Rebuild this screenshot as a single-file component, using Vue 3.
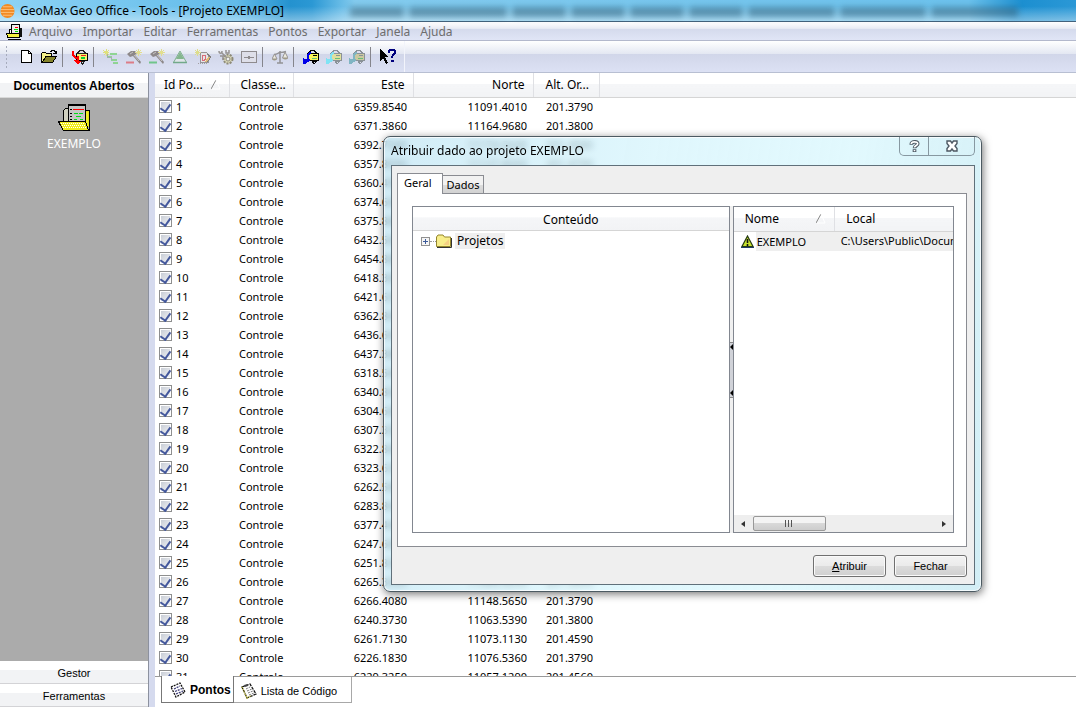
<script setup>
import { ref } from 'vue'

const menus = ['Arquivo', 'Importar', 'Editar', 'Ferramentas', 'Pontos', 'Exportar', 'Janela', 'Ajuda']

const points = ref([
  ['6359.8540', '11091.4010', '201.3790'],
  ['6371.3860', '11164.9680', '201.3800'],
  ['6392.7340', '11174.5600', '201.4580'],
  ['6357.8090', '11127.8060', '201.4790'],
  ['6360.4580'],
  ['6374.6080'],
  ['6375.8860'],
  ['6432.5680'],
  ['6454.8830'],
  ['6418.3680'],
  ['6421.6390'],
  ['6362.8450'],
  ['6436.6080'],
  ['6437.3860'],
  ['6318.5480'],
  ['6340.8630'],
  ['6304.6890'],
  ['6307.3580'],
  ['6322.8460'],
  ['6323.6380'],
  ['6262.5860'],
  ['6283.8630'],
  ['6377.4680'],
  ['6247.6830'],
  ['6251.8360'],
  ['6265.3680', '11080.6830', '201.3860'],
  ['6266.4080', '11148.5650', '201.3790'],
  ['6240.3730', '11063.5390', '201.3800'],
  ['6261.7130', '11073.1130', '201.4590'],
  ['6226.1830', '11076.5360', '201.3790'],
  ['6229.3250', '11057.1290', '201.4560'],
].map(([este, norte, alt], i) => ({ id: i + 1, este, norte, alt, checked: true })))
</script>

<template>
  <div class="app">
    <header class="titlebar">
      <svg class="logo" viewBox="0 0 16 16" aria-hidden="true">
        <circle cx="8" cy="8" r="7.5" fill="#f28a22" />
        <path d="M3 3.500h10M1 6.500h14M1 9.500h14M3 12.500h10" stroke="#ffc27c" stroke-width="1" />
      </svg>
      <h1>GeoMax Geo Office - Tools - [Projeto EXEMPLO]</h1>
      <div class="glass" aria-hidden="true"><i></i><i></i><i></i><i></i><i></i><i></i><i></i><i></i><i></i></div>
    </header>

    <nav class="menubar">
      <svg class="menuicon" viewBox="0 0 16 16" shape-rendering="crispEdges" aria-hidden="true">
        <path d="M3 5h3v6H3z" fill="#fff" stroke="#000" />
        <path d="M5.500.5h8v10h-8z" fill="#eee" stroke="#000" />
        <path d="M9 3h3" stroke="#f00" /><path d="M8 5.500h4M9 7.500h3" stroke="#0d0" />
        <path d="M14.500 4v9" stroke="#111" stroke-width="2" />
        <path d="M.5 9.500h13v4H2z" fill="#f5f242" stroke="#000" /><path d="M2 15h13" stroke="#000" />
      </svg>
      <button v-for="m in menus" :key="m" type="button">{{ m }}</button>
    </nav>

    <div class="toolbar" role="toolbar" aria-label="Ferramentas">
      <span class="grip"></span>
      <button type="button" aria-label="Novo">
        <svg viewBox="0 0 16 16" shape-rendering="crispEdges"><path d="M3.500 1.500h7l3 3v9h-10z" fill="#fff" stroke="#000" /><path d="M10.500 1.500v3h3" fill="none" stroke="#000" /></svg>
      </button>
      <button type="button" aria-label="Abrir">
        <svg viewBox="0 0 16 16" shape-rendering="crispEdges"><path d="M.5 13.500v-9l1-1h3l1 1h5v3" fill="#f6f28c" stroke="#000" /><path d="M1 13.500l4-6h10.500l-4 6z" fill="#85842b" stroke="#000" /><path d="M9 2.500h1v-1h3v1h1v2M12 4.500h3M15.500 2v3" fill="none" stroke="#000" /></svg>
      </button>
      <span class="sep"></span>
      <button type="button" aria-label="Importar dados">
        <svg viewBox="0 0 16 16" shape-rendering="crispEdges"><path d="M4.500 4.500h11v7h-11z" fill="#f6f36a" stroke="#000" /><path d="M5.500 4l3-3h2l3 3zM8 12l2.500 3 2.500-3z" fill="#ddd" stroke="#222" /><path d="M9 6.500h5" stroke="#e22" /><path d="M9 9h4" stroke="#1c3" stroke-width="2" /><path d="M1 1.500v5l4 3" fill="none" stroke="#f00" stroke-width="2" /><path d="M1 11h4V7h2v5h2l-3 4z" fill="#f00" /></svg>
      </button>
      <span class="sep"></span>
      <button type="button" aria-label="Lista">
        <svg viewBox="0 0 16 16" shape-rendering="crispEdges"><path d="M0 1l6 5M6 1L1 6M3 0v7M0 3.500h6" stroke="#dfe07c" /><path d="M7 4.500h7M4 8h5M8 11h6M10 14h5" stroke="#8fd494" stroke-width="2" /><path d="M4 5v3h4v3" fill="none" stroke="#a3b3ad" /></svg>
      </button>
      <button v-for="c in ['#dc7c87', '#70c58b']" :key="c" type="button" aria-label="Calcular">
        <svg viewBox="0 0 16 16"><path d="M1 5l4-3h4l2 2-2 2 6 7-1 2-7-8-3 1z" fill="#8d8889" /><path d="M4 5l3-2M8 6l5 6" stroke="#c8c6c4" /><path d="M0 13.500h8" :stroke="c" stroke-width="2" /><path d="M10 1l5 5M15 1l-5 5M12.500 0v7M9 3.500h7" stroke="#e2de8e" /></svg>
      </button>
      <button type="button" aria-label="Triângulo">
        <svg viewBox="0 0 16 16"><path d="M8 2L14.500 13.500h-13z" fill="#dfe5ea" stroke="#7fb08f" /><path d="M8 3l4 7H4z" fill="#83b68d" /><path d="M1 13.500h14" stroke="#72a98a" stroke-width="1.500" /></svg>
      </button>
      <button type="button" aria-label="Desenho">
        <svg viewBox="0 0 16 16" shape-rendering="crispEdges"><path d="M5.500 3.500h6l2 2v8h-8z" fill="#e5e4e6" stroke="#969499" /><path d="M7.500 6v5h2l1-1V7l-1-1z" fill="none" stroke="#d86c79" /><path d="M12.500 5l3 3-3 5" fill="none" stroke="#7f7d7b" /><path d="M14 8l-3 5" stroke="#dfba75" stroke-width="2" /><path d="M0 1l5 5M5 1L0 6M2.500 0v7M0 3.500h6" stroke="#dedd8c" /><path d="M3 14.500h9" stroke="#a29fa2" stroke-dasharray="1 1" /></svg>
      </button>
      <button type="button" aria-label="Configurar">
        <svg viewBox="0 0 16 16"><circle cx="10" cy="10" r="4.500" fill="#d5d4b5" stroke="#8d8a79" stroke-width="2" stroke-dasharray="2 1.200" /><circle cx="10" cy="10" r="2" fill="#eee" stroke="#918e7e" /><path d="M1 2c0 3 3 3 3 0M4 4l5 5M8 1v3h3V1M2 7h3v4" fill="none" stroke="#969393" stroke-width="1.500" /></svg>
      </button>
      <button type="button" aria-label="Nível">
        <svg viewBox="0 0 16 16" shape-rendering="crispEdges"><path d="M.5 2.500h15v11H.5z" fill="#dedfe9" stroke="#8e8b8e" /><path d="M3 8.500h10" stroke="#8e8b8e" /><path d="M8 7v3" stroke="#8e8b8e" stroke-width="2" /></svg>
      </button>
      <span class="sep"></span>
      <button type="button" aria-label="Balança">
        <svg viewBox="0 0 16 16"><path d="M8 2v12M5 14h6M2 5.500c4 0 4-2 6-2s3 0 6-1" fill="none" stroke="#939295" stroke-width="1.500" /><path d="M2.500 5L0 10h5zM13 3l-2.500 6H16z" fill="#eceadc" stroke="#969391" /><path d="M0 10h5q-2.500 3-5 0M10.500 9H16q-2.500 3-5.500 0" fill="#9f9a85" /></svg>
      </button>
      <span class="sep"></span>
      <button v-for="c in [['#0000e8', '#000', '#f7f35c'], ['#7fe3f4', '#8a9297', '#dfdf9d'], ['#80b5c3', '#8a9297', '#cbc9a0']]" :key="c[0]" type="button" aria-label="Exportar dados">
        <svg viewBox="0 0 16 16" shape-rendering="crispEdges"><path d="M5.500 4.500h10v7h-10z" :fill="c[2]" :stroke="c[1]" /><path d="M5.500 4l3-3h2l3 3zM9 12l2 3 2.500-3z" fill="#dde" :stroke="c[1]" /><path d="M10 6.500h4" :stroke="c[1]" /><path d="M9 9h5" stroke="#69bf78" /><path d="M8 4H7L5 6v5" fill="none" :stroke="c[0]" stroke-width="2" /><path d="M0 9l2 1h5v2l-3 1-2 2H0z" :fill="c[0]" /></svg>
      </button>
      <span class="sep"></span>
      <button type="button" aria-label="Ajuda contextual">
        <svg viewBox="0 0 16 16" shape-rendering="crispEdges"><path d="M0 0v12l3-3 3 6 2-1-3-6h4z" fill="#000" /><path d="M9 4V2q0-1 2-1h2q2 0 2 2t-2 3q-1 1-1 3M11 12h3" fill="none" stroke="#00007c" stroke-width="2" /></svg>
      </button>
      <span class="toolend"></span>
    </div>

    <div class="body">
      <aside class="sidebar">
        <h2>Documentos Abertos</h2>
        <div class="docs">
          <button type="button" class="doc">
            <svg viewBox="0 0 32 28" shape-rendering="crispEdges" aria-hidden="true">
              <path d="M5.500 18V6.500l2-2h4v14" fill="#d0d0c0" stroke="#000" />
              <path d="M10.500 1v19h17V1z" fill="#c6c6c6" stroke="#000" /><path d="M10 .5h18" stroke="#000" />
              <path d="M28 6.500h3V26" fill="#e5e11a" stroke="#000" /><path d="M29 8v17" stroke="#f0ed25" stroke-width="2" />
              <path d="M15 5.500h11" stroke="#f00" /><path d="M16 9.500h4M21 9.500h4M18 12.500h5M16 15.500h3M22 15.500h3" stroke="#00dd18" />
              <path d="M12 5.500h2M12 9.500h2M12 12.500h2M12 15.500h2" stroke="#000" />
              <path d="M.5 17.500h27l3 8.500H5z" fill="#f1ed1d" stroke="#000" />
              <path d="M3 19.500h23M4 21.500h24M5 23.500h24" stroke="#fff" stroke-dasharray="1 1" />
              <path d="M5 26.500h27" stroke="#000" />
            </svg>
            EXEMPLO
          </button>
        </div>
        <button type="button" class="group">Gestor</button>
        <button type="button" class="group">Ferramentas</button>
      </aside>

      <main class="content">
        <div class="list">
          <table>
            <colgroup><col class="c1"><col class="c2"><col class="c3"><col class="c3"><col class="c4"><col></colgroup>
            <thead>
              <tr>
                <th><span class="sorted">Id Po...<svg viewBox="0 0 10 10" aria-hidden="true"><path d="M0 9L5 0" stroke="#888" fill="none" /><path d="M5 0l4 9H1" stroke="#fff" fill="none" /></svg></span></th>
                <th>Classe...</th>
                <th class="num">Este</th>
                <th class="num">Norte</th>
                <th class="alt">Alt. Or...</th>
                <th></th>
              </tr>
            </thead>
            <tbody>
              <tr v-for="p in points" :key="p.id">
                <td><label class="check"><input v-model="p.checked" type="checkbox">{{ p.id }}</label></td>
                <td>Controle</td>
                <td class="num">{{ p.este }}</td>
                <td class="num">{{ p.norte }}</td>
                <td class="num">{{ p.alt }}</td>
                <td></td>
              </tr>
            </tbody>
          </table>
        </div>
        <div class="viewtabs" role="tablist">
          <button type="button" role="tab" aria-selected="true" class="on">
            <svg viewBox="0 0 16 16" aria-hidden="true"><path d="M1 5l9-4 5 9-9 5z" fill="#fff" stroke="#111" stroke-width="1.300" stroke-dasharray="2 1" /><path d="M4 7l6-3M5 9.500l7-3M6 12l7-3" stroke="#3b3a77" stroke-width="1.300" stroke-dasharray="2 1" /></svg>
            Pontos
          </button>
          <button type="button" role="tab" aria-selected="false">
            <svg viewBox="0 0 16 16" aria-hidden="true"><path d="M1 4l8-3 6 10-9 4z" fill="#fff" stroke="#111" stroke-width="1.300" stroke-dasharray="3 1" /><path d="M1 4l5 11 4-2" fill="none" stroke="#c8c43b" stroke-width="1.500" stroke-dasharray="1 1" /><path d="M5 6l4-2M6 8l5-2M7 10l5-2M8 12l5-2" stroke="#777" stroke-dasharray="2 1" /><path d="M3 2l4-1v2L4 4z" fill="#444" /></svg>
            Lista de Código
          </button>
        </div>
      </main>
    </div>

    <section class="dialog" role="dialog" aria-labelledby="dlg-title">
      <div class="dlg-head">
        <h2 id="dlg-title">Atribuir dado ao projeto EXEMPLO</h2>
        <div class="caption">
          <button type="button" class="help" aria-label="Ajuda">
            <svg viewBox="0 0 12 14"><path d="M2.500 5c0-4 7-4 7-1 0 2-3.500 2-3.500 5M6 10v3" fill="none" stroke="#4d5863" stroke-width="4" /><path d="M2.500 4.200c0-3 7-3 7-.2 0 2-3.500 2-3.500 4.200M6 10.700v1.600" fill="none" stroke="#fff" stroke-width="1.800" /></svg>
          </button>
          <button type="button" class="close" aria-label="Fechar janela">
            <svg viewBox="0 0 12 12"><path d="M1 1h3.500L6 3l1.500-2H11v2.500L9 6l2 2.500V11H7.500L6 9l-1.500 2H1V8.500L3 6 1 3.500z" fill="#fff" stroke="#4d5863" stroke-width="1.400" /></svg>
          </button>
        </div>
      </div>
      <div class="dlg-body">
        <div class="tabs" role="tablist">
          <button type="button" role="tab" aria-selected="true" class="on">Geral</button>
          <button type="button" role="tab" aria-selected="false">Dados</button>
        </div>
        <div class="pane">
          <div class="tree">
            <div class="head center">Conteúdo</div>
            <div class="node">
              <button type="button" class="expand" aria-label="Expandir"></button>
              <span class="dots"></span>
              <svg viewBox="0 0 16 14" aria-hidden="true"><path d="M.5 12.500V3L2 1h5l1.500 2h6v9.500z" fill="#f8ee8b" stroke="#94862c" /><path d="M1 13.500h14.500V4" fill="none" stroke="#333" /><path d="M7 11l6-6v6z" fill="#f4cf84" /></svg>
              <span class="label">Projetos</span>
            </div>
          </div>
          <div class="splitter"><span class="handle"><i></i><i></i></span></div>
          <div class="files">
            <table>
              <colgroup><col class="f1"><col></colgroup>
              <thead>
                <tr>
                  <th><span class="sorted">Nome<svg viewBox="0 0 10 10" aria-hidden="true"><path d="M0 9L5 0" stroke="#888" fill="none" /><path d="M5 0l4 9H1" stroke="#fff" fill="none" /></svg></span></th>
                  <th>Local</th>
                </tr>
              </thead>
              <tbody>
                <tr>
                  <td><span class="file"><svg viewBox="0 0 13 13" aria-hidden="true"><path d="M6.500 1L12 11.500H1z" fill="#c7e22e" stroke="#263b12" stroke-width="1.200" /><path d="M0 12.500h13" stroke="#1d3a66" /><path d="M6.500 4v4M6.500 9v2" stroke="#111" stroke-width="1.600" /></svg><span>EXEMPLO</span></span></td>
                  <td class="path">C:\Users\Public\Documents</td>
                </tr>
              </tbody>
            </table>
            <div class="scroll">
              <button type="button" class="left" aria-label="Rolar para a esquerda"></button>
              <span class="thumb"><i></i></span>
              <button type="button" class="right" aria-label="Rolar para a direita"></button>
            </div>
          </div>
        </div>
        <div class="actions">
          <button type="button"><u>A</u>tribuir</button>
          <button type="button">Fechar</button>
        </div>
      </div>
    </section>
  </div>
</template>

<style>
body { background: #fff; }
</style>

<style scoped>
* { box-sizing: border-box; }
.app { position: relative; display: flex; flex-direction: column; height: 100vh; overflow: hidden; font: 12px/16px "Noto Sans", sans-serif; color: #000; }
button { margin: 0; padding: 0; border: 0; background: none; font: inherit; color: inherit; }
h1, h2 { margin: 0; font: inherit; white-space: nowrap; }
table { width: 100%; border-collapse: collapse; table-layout: fixed; }
th, td { padding: 0; font-weight: normal; text-align: left; white-space: nowrap; overflow: hidden; }

.titlebar { display: flex; align-items: center; flex: none; height: 22px; border-bottom: 1px solid #42627c; background: linear-gradient(rgba(255,255,255,0) 30%, rgba(255,255,255,.4)), linear-gradient(90deg, #8dd3f5 0, #62bbe9 22%, #2492cf 27%, #2b98d4 29%, #84ccef 33%, #74c5ed 70%, #6cc2ed 90%, #1c8fd0 95%, #2b98d6 100%); }
.logo { width: 15px; height: 16px; }
.titlebar h1 { margin-left: 5px; }
.glass { display: flex; gap: 5px; flex: 1; margin: 2px 58px 0 66px; filter: blur(3px); opacity: .5; }
.glass i { height: 10px; flex: 5; background: #24536d; }
.glass i:nth-child(2) { flex: 9; }
.glass i:nth-child(n+7) { flex: 8; }

.menubar { display: flex; flex: none; align-items: center; height: 19px; padding: 2px 0 0 6px; border-bottom: 1px solid #b3b8cc; background: linear-gradient(#fff, #e8ebf4 36%, #d4daec 37%, #e0e5f6); color: #6d6d6d; }
.menuicon { width: 16px; height: 16px; margin-right: 7px; }
.menubar button { margin-right: 10px; }

.toolbar { display: flex; flex: none; align-items: center; height: 32px; padding-left: 5px; border-bottom: 1px solid #b8bfd2; background: linear-gradient(#fff, #e3e7f2 42%, #d1d6e9 43%, #dce1f4); }
.grip { width: 3px; height: 24px; margin-right: 6px; background: radial-gradient(circle, #a6abbc 1px, transparent 1px) 0 0 / 3px 4px; }
.toolbar button { display: flex; align-items: center; justify-content: center; width: 23px; height: 24px; }
.toolbar svg { width: 16px; height: 16px; }
.sep { width: 8px; height: 20px; background: linear-gradient(90deg, transparent 2px, #85858c 2px 3px, transparent 3px); }
.toolend { width: 1px; height: 31px; margin-left: 5px; background: #f2f4fb; }

.body { display: flex; flex: 1; min-height: 0; background: #d5daee; }
.sidebar { display: flex; flex-direction: column; flex: none; width: 149px; border-right: 1px solid #8c919f; background: #ababab; font: 11px/14px "Liberation Sans", Arial, sans-serif; }
.sidebar h2 { height: 25px; border-bottom: 1px solid #d8d8d8; background: linear-gradient(#fff 40%, #f2f3f5 41%, #f2f3f5); font-size: 12px; font-weight: bold; line-height: 27px; text-align: center; }
.docs { flex: 1; padding-top: 6px; text-align: center; }
.doc { display: inline-flex; flex-direction: column; align-items: center; gap: 4px; color: #fff; font: 12px/16px "Noto Sans", sans-serif; }
.doc svg { width: 32px; height: 28px; }
.group { flex: none; height: 23px; padding-top: 2px; border-bottom: 1px solid #d3d3d6; background: linear-gradient(#fff 40%, #f2f3f5 41%, #f2f3f5); }

.content { display: flex; flex: 1; flex-direction: column; min-width: 0; margin-left: 6px; background: #fff; }
.list { flex: 1; min-height: 0; overflow: hidden; border-bottom: 1px solid #9a9a9a; }
.c1 { width: 74px; } .c2 { width: 64px; } .c3 { width: 120px; } .c4 { width: 66px; }
th { height: 24px; padding-left: 11px; border-bottom: 1px solid #d5d5d5; border-right: 1px solid #dfe0e4; background: linear-gradient(#fff 45%, #f5f6f8 46%, #f2f3f5); }
.list th:first-child { padding-left: 9px; }
th:last-child { border-right: 0; }
.sorted { display: flex; align-items: center; justify-content: space-between; padding-right: 8px; }
.sorted svg { flex: none; width: 10px; height: 10px; }
.list td { height: 19px; padding-left: 10px; font-size: 11px; }
.list td:first-child { padding-left: 4px; }
.list .num { text-align: right; padding: 0 6px 0 0; }
.list th.num { padding-right: 8px; }
.list th.alt { padding-left: 12px; }
.check { display: flex; align-items: center; gap: 4px; }
.check input { appearance: none; display: flex; align-items: flex-start; justify-content: center; width: 13px; height: 13px; margin: 0; padding: 1px; border: 1px solid #8e8f8f; background: linear-gradient(135deg, #c8cdd6, #f2f3f5) content-box #fff; }
.check input:checked::after { content: ""; display: block; width: 5px; height: 8px; border: solid #44589c; border-width: 0 2px 2px 0; transform: rotate(35deg); }

.viewtabs { display: flex; flex: none; height: 30px; padding-left: 6px; font: 11px/14px "Liberation Sans", Arial, sans-serif; }
.viewtabs button { display: flex; align-items: center; gap: 4px; height: 26px; padding: 2px 14px 0 7px; border: 1px solid #a8a8a8; border-width: 0 1px 1px 0; background: #fff; }
.viewtabs .on { padding: 2px 2px 0 8px; margin-top: -1px; height: 27px; border: 1px solid #777; border-top: 0; font-weight: bold; font-size: 12px; }
.viewtabs svg { width: 16px; height: 16px; }

.dialog { position: absolute; left: 383px; top: 136px; display: flex; flex-direction: column; width: 599px; height: 456px; padding: 0 6px 6px 7px; border: 1px solid #4c5a62; border-radius: 7px; background: linear-gradient(100deg, rgba(190,228,243,.7), rgba(212,244,252,.72) 40%, rgba(218,247,253,.8) 70%, rgba(205,236,244,.9)); backdrop-filter: blur(3px); box-shadow: inset 0 0 0 1px rgba(255,255,255,.75), 1px 2px 8px rgba(0,0,0,.55); }
.dlg-head { display: flex; flex: none; justify-content: space-between; height: 28px; }
.dlg-head h2 { line-height: 28px; }
.caption { display: flex; height: 19px; border: 1px solid #8798a1; border-top: 0; border-radius: 0 0 5px 5px; }
.caption button { display: flex; align-items: center; justify-content: center; }
.help { width: 28px; }
.caption .close { width: 46px; border-left: 1px solid #8798a1; }
.help svg { width: 11px; height: 13px; }
.close svg { width: 12px; height: 12px; }
.dlg-body { display: flex; flex: 1; flex-direction: column; min-height: 0; padding: 7px 7px 7px 5px; border: 1px solid #60707a; background: #efefef; }
.tabs { display: flex; flex: none; align-items: flex-end; height: 20px; }
.tabs button { height: 18px; padding: 0 4px; border: 1px solid #8a8c92; border-left: 0; border-bottom: 0; background: linear-gradient(#f2f2f2 50%, #ddd 51%, #d2d2d2); font-size: 11px; }
.tabs .on { position: relative; height: 21px; margin-bottom: -1px; padding: 0 10px 2px 6px; border-left: 1px solid #8a8c92; background: #fff; }
.pane { display: flex; flex: 1; min-height: 0; padding: 12px 12px 13px 14px; border: 1px solid #8a8c92; background: #fff; }
.tree, .files { display: flex; flex-direction: column; min-width: 0; border: 1px solid #828790; background: #fff; overflow: hidden; }
.tree { flex: 318; }
.files { flex: 221; }
.head { height: 24px; border-bottom: 1px solid #d5d5d5; background: linear-gradient(#fff 45%, #f5f6f8 46%, #f2f3f5); line-height: 25px; }
.center { text-align: center; }
.node { display: flex; align-items: center; height: 20px; padding-left: 8px; }
.expand { width: 9px; height: 9px; border: 1px solid #919191; background: linear-gradient(#3c5a9a, #3c5a9a) center / 5px 1px no-repeat, linear-gradient(#3c5a9a, #3c5a9a) center / 1px 5px no-repeat, #f5f5f5; }
.dots { width: 6px; border-top: 1px dotted #999; }
.node svg { width: 16px; height: 14px; }
.label { margin-left: 3px; padding: 0 2px; background: #efefef; }
.splitter { display: flex; align-items: center; width: 3px; background: #f0f0f0; }
.handle { display: flex; flex-direction: column; justify-content: space-between; width: 3px; height: 56px; padding: 1px 0; border: solid #888; border-width: 1px 0; background: #d0d2d8; }
.handle i { border: solid transparent; border-width: 3px 3px 3px 0; border-right-color: #000; }
.files th { height: 24px; padding-top: 1px; }
.f1 { width: 101px; }
.files td { height: 20px; }
.file { display: flex; align-items: center; gap: 2px; padding-left: 7px; }
.file svg { flex: none; width: 13px; height: 13px; }
.file span { flex: 1; padding-left: 1px; background: #efefef; line-height: 19px; font-size: 11px; }
.files .path { padding-left: 6px; background: #efefef; font-size: 11px; text-overflow: clip; }
.scroll { display: flex; align-items: center; height: 17px; margin-top: auto; background: #eee; }
.scroll button { width: 19px; height: 17px; }
.scroll button::after { content: ""; display: block; width: 0; margin: 0 auto; border: solid transparent; border-width: 3px 4px 3px 0; border-right-color: #333; }
.scroll .right { margin-left: auto; }
.scroll .right::after { border-width: 3px 0 3px 4px; border-left-color: #333; }
.thumb { display: flex; align-items: center; justify-content: center; width: 73px; height: 15px; border: 1px solid #989898; border-radius: 2px; background: linear-gradient(#f4f4f4 48%, #d9d9d9 50%, #cdcdcd); }
.thumb i { width: 8px; height: 7px; background: repeating-linear-gradient(90deg, #555 0 1px, transparent 1px 3px); }
.actions { display: flex; flex: none; justify-content: flex-end; gap: 8px; margin-top: 8px; }
.actions button { width: 73px; height: 22px; border: 1px solid #707070; border-radius: 3px; background: linear-gradient(#f3f3f3, #ebebeb 48%, #dcdcdc 50%, #cfcfcf); box-shadow: inset 0 0 0 1px #fafafa; font: 11px/14px "Liberation Sans", Arial, sans-serif; }
</style>
